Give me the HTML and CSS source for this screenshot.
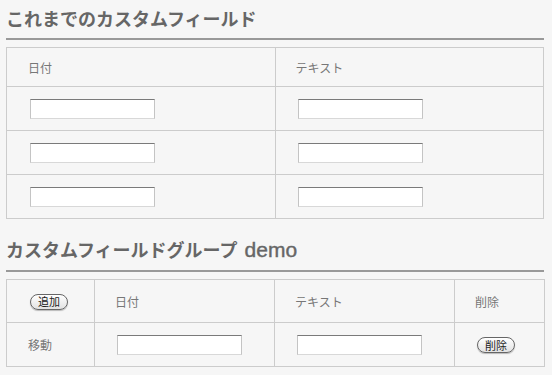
FILE: index.html
```html
<!DOCTYPE html>
<html lang="ja">
<head>
<meta charset="utf-8">
<link rel="stylesheet" href="styles.css">
</head>
<body>
<div class="page">
  <h2 class="title first">これまでのカスタムフィールド</h2>
  <table class="grid">
    <colgroup><col class="half"><col class="half"></colgroup>
    <tr class="head"><th>日付</th><th>テキスト</th></tr>
    <tr class="row"><td><input type="text" class="field"></td><td><input type="text" class="field"></td></tr>
    <tr class="row"><td><input type="text" class="field"></td><td><input type="text" class="field"></td></tr>
    <tr class="row"><td><input type="text" class="field"></td><td><input type="text" class="field"></td></tr>
  </table>
  <h2 class="title second">カスタムフィールドグループ <span class="latin">demo</span></h2>
  <table class="grid">
    <colgroup><col class="narrow"><col class="wide"><col class="wide"><col class="narrow2"></colgroup>
    <tr class="head2"><th><button class="pill">追加</button></th><th>日付</th><th>テキスト</th><th>削除</th></tr>
    <tr class="row"><td class="label">移動</td><td><input type="text" class="field"></td><td><input type="text" class="field"></td><td><button class="pill">削除</button></td></tr>
  </table>
</div>
</body>
</html>
```
FILE: styles.css
```css
html, body {
  margin: 0;
  padding: 0;
  background: #f6f6f6;
}
body {
  font-family: "Noto Sans CJK JP", "Liberation Sans", sans-serif;
  color: #777;
}
.page {
  width: 538px;
  padding: 7px 0 0 6px;
}
.title {
  margin: 0;
  height: 22px;
  font-family: "Noto Sans CJK JP", "Liberation Sans", sans-serif;
  font-size: 18px;
  line-height: 22px;
  font-weight: bold;
  color: #666;
  border-bottom: 2px solid #999;
}
.latin {
  margin-left: 3px;
  font-family: "Liberation Sans", sans-serif;
  font-size: 21px;
  line-height: 10px;
  font-weight: normal;
  -webkit-text-stroke: 0.4px #666;
}
.title.first {
  padding-bottom: 9px;
}
.title.second {
  margin-top: 19px;
  padding-bottom: 10px;
}
.grid {
  width: 538px;
  border-collapse: collapse;
  table-layout: fixed;
  margin-top: 7px;
}
.half { width: 268px; }
.narrow { width: 88px; }
.wide { width: 180px; }
.narrow2 { width: 90px; }
.grid th, .grid td {
  border: 1px solid #cccccc;
  padding: 0 0 0 20px;
  text-align: left;
  vertical-align: middle;
  font-weight: normal;
  font-size: 12px;
  color: #777;
}
.head th { height: 38px; }
.head2 th { height: 42px; }
.row td { height: 43px; }
.grid th:first-child, .grid td:first-child { padding-left: 21px; }
.field {
  display: block;
  box-sizing: border-box;
  width: 125px;
  height: 20px;
  margin: 0 0 0 2px;
  padding: 0;
  background: #fff;
  border: 1px solid #c4c4c4;
  border-top-color: #7a7a7a;
  border-bottom-color: #d8d8d8;
}
.pill {
  display: inline-block;
  box-sizing: border-box;
  height: 16px;
  padding: 0 7px;
  margin: 0 0 0 2px;
  border: 1px solid #666;
  border-radius: 8px;
  background: linear-gradient(#ffffff, #e2e2e2);
  box-shadow: 0 1px 1px rgba(0, 0, 0, 0.25);
  font-family: "Noto Sans CJK JP", sans-serif;
  font-size: 11px;
  line-height: 13px;
  color: #222;
}
```
